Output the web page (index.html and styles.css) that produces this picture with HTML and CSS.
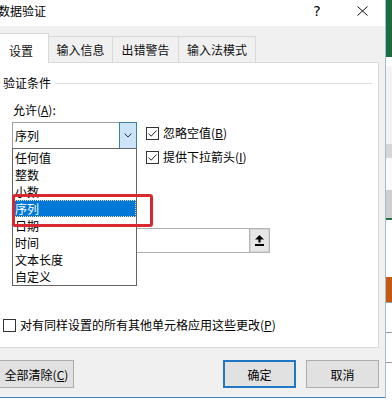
FILE: index.html
```html
<!DOCTYPE html>
<html lang="zh-CN">
<head>
    <meta charset="UTF-8">
    <meta name="viewport" content="width=device-width, initial-scale=1.0">
    <title>数据验证</title>
    <link rel="stylesheet" href="styles.css">
</head>
<body>
    <div class="screen">
        <div class="dialog">
            <div class="titlebar">
                <span class="title">数据验证</span>
                <span class="help">?</span>
                <span class="close">
                    <svg width="11" height="10" viewBox="0 0 11 10"><path d="M0.5 0.5 L10.5 9.5 M10.5 0.5 L0.5 9.5" stroke="#111" stroke-width="1" fill="none"/></svg>
                </span>
            </div>

            <div class="dlg-body">
                <div class="tabs">
                    <div class="tab active">设置</div>
                    <div class="tab t-info">输入信息</div>
                    <div class="tab t-warn">出错警告</div>
                    <div class="tab t-ime">输入法模式</div>
                </div>

                <div class="panel">
                    <div class="group-title"><span>验证条件</span><i class="rule"></i></div>

                    <div class="criteria">
                        <div class="allow-col">
                            <div class="field-label">允许(<u>A</u>):</div>
                            <div class="combo">
                                <span class="combo-value">序列</span>
                                <span class="combo-btn">
                                    <svg width="8" height="5" viewBox="0 0 8 5"><path d="M0.5 0.5 L4 4 L7.5 0.5" stroke="#333" stroke-width="1" fill="none"/></svg>
                                </span>
                                <!-- opened list -->
                                <ul class="droplist">
                                    <li>任何值</li>
                                    <li>整数</li>
                                    <li>小数</li>
                                    <li class="selected">序列</li>
                                    <li>日期</li>
                                    <li>时间</li>
                                    <li>文本长度</li>
                                    <li>自定义</li>
                                </ul>
                            </div>
                        </div>
                        <div class="check-col">
                            <div class="check">
                                <span class="box"><svg width="11" height="11" viewBox="0 0 11 11"><path d="M1.5 5.5 L4.2 8.2 L9.5 2.5" stroke="#222" stroke-width="1" fill="none"/></svg></span>
                                <span>忽略空值(<u>B</u>)</span>
                            </div>
                            <div class="check">
                                <span class="box"><svg width="11" height="11" viewBox="0 0 11 11"><path d="M1.5 5.5 L4.2 8.2 L9.5 2.5" stroke="#222" stroke-width="1" fill="none"/></svg></span>
                                <span>提供下拉箭头(<u>I</u>)</span>
                            </div>
                        </div>
                    </div>

                    <div class="source">
                        <span class="ref-btn">
                            <svg width="9" height="11" viewBox="0 0 9 11"><path d="M4.5 0 L9 4.5 L5.6 4.5 L5.6 7.5 L3.4 7.5 L3.4 4.5 L0 4.5 Z" fill="#000"/><rect x="0" y="9" width="9" height="2" fill="#000"/></svg>
                        </span>
                    </div>

                    <div class="check apply">
                        <span class="box"></span>
                        <span>对有同样设置的所有其他单元格应用这些更改(<u>P</u>)</span>
                    </div>
                </div>

                <div class="buttons">
                    <button class="btn btn-clear">全部清除(<u>C</u>)</button>
                    <button class="btn btn-ok">确定</button>
                    <button class="btn btn-cancel">取消</button>
                </div>
            </div>
        </div>

        <div class="sheet-edge">
            <div class="e1"></div>
            <div class="e2"></div>
            <div class="e3"></div>
            <div class="e4"></div>
            <div class="e5"></div>
            <div class="e6"></div>
            <div class="e7"></div>
            <div class="e8"></div>
            <div class="e9"></div>
            <div class="e10"></div>
            <div class="e11"></div>
            <div class="e10"></div>
            <div class="e11"></div>
            <div class="e10"></div>
            <div class="e12"></div>
        </div>
    </div>
</body>
</html>
```

FILE: styles.css
```css
* {
    box-sizing: border-box;
}

html, body {
    margin: 0;
    padding: 0;
}

body {
    width: 392px;
    height: 400px;
    overflow: hidden;
    background: #fff;
    color: #000;
    font-family: "Noto Sans CJK SC", "Noto Sans", sans-serif;
    font-size: 12px;
}

u {
    text-decoration: underline;
    text-underline-offset: 1px;
}

.screen {
    display: flex;
    width: 392px;
    height: 400px;
}

.dialog {
    flex: none;
    width: 396px;
    height: 398px;
    margin-left: -10px;
    background: #f0f0f0;
    border-right: 1px solid #a9bccb;
    border-bottom: 1px solid #3b86c2;
}

/* title bar */
.titlebar {
    display: flex;
    align-items: flex-start;
    height: 26px;
    background: #fff;
}

.title {
    flex: 1;
    padding: 3px 0 0 8px;
    line-height: 16px;
}

.help {
    width: 44px;
    padding-top: 2px;
    line-height: 18px;
    text-align: center;
    font-family: "DejaVu Sans", sans-serif;
    font-size: 14px;
}

.close {
    width: 46px;
    display: flex;
    justify-content: center;
    padding-top: 6px;
}

/* body */
.dlg-body {
    padding: 7px 6px 0 6px;
}

.tabs {
    display: flex;
    align-items: flex-end;
    height: 29px;
    margin-left: -3px;
}

.tab {
    display: flex;
    align-items: center;
    justify-content: center;
    height: 26px;
    background: #f0f0f0;
    border-top: 1px solid #d9d9d9;
    border-right: 1px solid #d9d9d9;
    color: #111;
}

.tab.active {
    position: relative;
    z-index: 2;
    width: 56px;
    height: 30px;
    margin-bottom: -1px;
    padding-top: 3px;
    background: #fff;
    border-left: 1px solid #d9d9d9;
}

.t-info {
    width: 64px;
}

.t-warn {
    width: 66px;
}

.t-ime {
    width: 77px;
}

.panel {
    position: relative;
    background: #fff;
    border: 1px solid #d9d9d9;
    padding: 12px 6px 14px 6px;
}

.group-title {
    display: flex;
    align-items: center;
    line-height: 16px;
}

.rule {
    flex: 1;
    height: 1px;
    margin-left: 4px;
    background: #dcdcdc;
}

.criteria {
    display: flex;
    margin-top: 11px;
    padding-left: 9px;
}

.field-label {
    padding-left: 1px;
    line-height: 16px;
}

.combo {
    position: relative;
    display: flex;
    width: 125px;
    height: 27px;
    margin-top: 4px;
    border: 1px solid #a0a0a0;
    background: #fff;
}

.combo-value {
    flex: 1;
    padding-left: 2px;
    line-height: 25px;
}

.combo-btn {
    display: flex;
    align-items: center;
    justify-content: center;
    width: 18px;
    margin: -1px -1px -1px 0;
    background: #cce4f7;
    border: 1px solid #3c7fb1;
}

.droplist {
    position: absolute;
    z-index: 5;
    top: 100%;
    left: -1px;
    width: 125px;
    margin: 0;
    padding: 0;
    list-style: none;
    background: #fff;
    border: 1px solid #646464;
}

.droplist li {
    height: 17px;
    padding-left: 2px;
    line-height: 17px;
}

.droplist li.selected {
    position: relative;
    background: #0078d7;
    color: #fff;
    outline: 1px dotted #f3d9a6;
    outline-offset: -1px;
}

/* highlight mark over the list */
.droplist li.selected::after {
    content: "";
    position: absolute;
    left: -1px;
    top: -6px;
    width: 135px;
    height: 27px;
    border: 3px solid #d9282f;
    border-radius: 3px;
}

.check-col {
    display: flex;
    flex-direction: column;
    gap: 8px;
    margin-left: 9px;
    padding-top: 23px;
}

.check {
    display: flex;
    align-items: center;
    gap: 4px;
    line-height: 16px;
}

.box {
    display: flex;
    width: 13px;
    height: 13px;
    background: #fff;
    border: 1px solid #333;
}

.source {
    display: flex;
    justify-content: flex-end;
    width: 258px;
    height: 25px;
    margin: 63px 0 0 9px;
    border: 1px solid #adadad;
    background: #fff;
}

.ref-btn {
    display: flex;
    align-items: center;
    justify-content: center;
    width: 21px;
    margin: -1px -1px -1px 0;
    background: #e6e6e6;
    border: 1px solid #b4b4b4;
    box-shadow: inset 0 0 0 1px #d4d4d4;
}

.apply {
    margin-top: 64px;
}

/* bottom buttons */
.buttons {
    display: flex;
    margin-top: 12px;
}

.btn {
    height: 28px;
    padding: 0;
    background: #e1e1e1;
    border: 1px solid #adadad;
    font-family: inherit;
    font-size: 12px;
    color: #000;
}

.btn-clear {
    width: 75px;
    margin-left: 3px;
}

.btn-ok {
    width: 73px;
    margin-left: auto;
    border: 2px solid #1f78c1;
}

.btn-cancel {
    width: 73px;
    margin-left: 10px;
}

/* strip of the worksheet behind the dialog */
.sheet-edge {
    flex: none;
    display: flex;
    flex-direction: column;
    width: 6px;
    height: 400px;
}

.e1 { height: 57px; background: #1f6b41; }
.e2 { height: 9px; background: #fff; }
.e3 { height: 78px; background: #f3f3f3; }
.e4 { height: 14px; background: #d6d6d6; }
.e5 { height: 32px; background: #fafafa; }
.e6 { height: 28px; background: #cfcfcf; }
.e7 { height: 2px; background: #217346; }
.e8 { height: 57px; background: #fff; }
.e9 { height: 25px; background: #c65911; }
.e10 { height: 1px; background: #9a9a9a; }
.e11 { height: 29px; background: #fff; }
.e12 { height: 14px; background: #fff; }
```
